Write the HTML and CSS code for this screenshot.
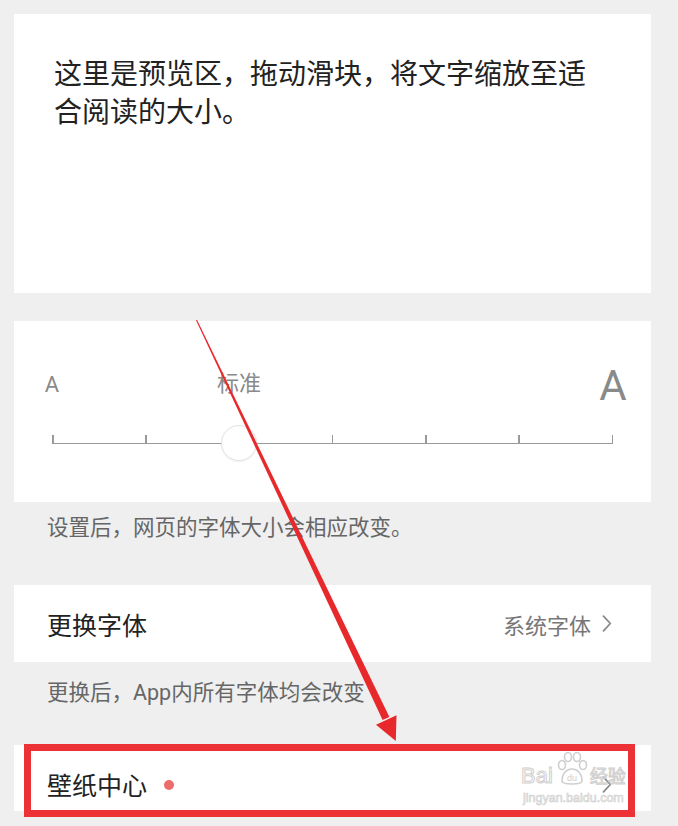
FILE: index.html
```html
<!DOCTYPE html>
<html lang="zh-CN">
<head>
<meta charset="utf-8">
<title>字体大小</title>
<link rel="stylesheet" href="styles.css">
</head>
<body>
<div class="page">
  <section class="card preview">
    <p class="preview-text">这里是预览区，拖动滑块，将文字缩放至适合阅读的大小。</p>
  </section>

  <section class="card slider-card">
    <div class="labels">
      <span class="slot"><span class="lbl lbl-small">A</span></span>
      <span class="slot"></span>
      <span class="slot"><span class="lbl lbl-std">标准</span></span>
      <span class="slot"></span>
      <span class="slot"></span>
      <span class="slot"></span>
      <span class="slot"><span class="lbl lbl-big">A</span></span>
    </div>
    <div class="track-wrap">
      <div class="track">
        <span class="tick"></span><span class="tick"></span><span class="tick"></span><span class="tick"></span><span class="tick"></span><span class="tick"></span><span class="tick"></span>
      </div>
      <span class="thumb"></span>
    </div>
  </section>

  <p class="caption cap1">设置后，网页的字体大小会相应改变。</p>

  <section class="card row">
    <span class="row-title">更换字体</span>
    <span class="row-value">系统字体
      <svg class="chev" width="10" height="17" viewBox="0 0 10 17"><path d="M1.5 1.2 L8.3 8.5 L1.5 15.8" fill="none" stroke="#8a8a8a" stroke-width="1.8" stroke-linecap="round" stroke-linejoin="round"/></svg>
    </span>
  </section>

  <p class="caption cap2">更换后，App内所有字体均会改变</p>

  <section class="card row last-row">
    <span class="row-title">壁纸中心 <span class="dot"></span></span>
    <span class="row-value">
      <svg class="chev" width="10" height="17" viewBox="0 0 10 17"><path d="M1.5 1.2 L8.3 8.5 L1.5 15.8" fill="none" stroke="#8a8a8a" stroke-width="1.8" stroke-linecap="round" stroke-linejoin="round"/></svg>
    </span>
    <span class="highlight"></span>
    <span class="watermark">
      <span class="wm-top"><span class="wm-bai">Bai</span><svg class="wm-paw" width="36" height="36" viewBox="0 0 36 36"><g fill="none" stroke="#cfcfcf" stroke-width="1.6"><ellipse cx="8" cy="14" rx="3.5" ry="4.5"/><ellipse cx="14" cy="6" rx="3.5" ry="4.5"/><ellipse cx="23" cy="6" rx="3.5" ry="4.5"/><ellipse cx="29" cy="14" rx="3.5" ry="4.5"/><path d="M8 30 C8 22 13 18 18 18 C23 18 28 22 28 30 C28 34 8 34 8 30 Z"/></g><text x="18" y="30" font-size="9" text-anchor="middle" fill="#cfcfcf" font-family="Liberation Sans, sans-serif">du</text></svg><span class="wm-jy">经验</span></span>
      <span class="wm-url">jingyan.baidu.com</span>
    </span>
  </section>

  <svg class="arrow" width="678" height="826" viewBox="0 0 678 826">
    <polygon points="196.0,320.2 197.0,319.8 389.4,717.0 382.6,720.0" fill="#e8292c"/>
    <polygon points="376,724.7 396.5,715.2 395.8,741" fill="#e8292c"/>
  </svg>
</div>
</body>
</html>
```

FILE: styles.css
```css
html, body {
  margin: 0;
  padding: 0;
}
body {
  background: #efefef;
  font-family: Roboto, "Noto Sans CJK SC", "Noto Sans", sans-serif;
  width: 678px;
  height: 826px;
  overflow: hidden;
}
.page {
  position: relative;
  width: 637px;
  padding: 14px 27px 0 14px;
}
.card {
  background: #ffffff;
}
.preview {
  height: 279px;
  box-sizing: border-box;
  padding: 42px 40px 0 40px;
}
.preview-text {
  margin: 0;
  font-size: 28px;
  line-height: 38px;
  color: #222222;
}
.slider-card {
  margin-top: 28px;
  height: 181px;
  box-sizing: border-box;
  padding: 40px 38px 0 38px;
}
.labels {
  display: flex;
  justify-content: space-between;
  align-items: center;
  height: 48px;
}
.slot {
  width: 0;
  display: flex;
  justify-content: center;
  align-items: center;
}
.lbl {
  white-space: nowrap;
  color: #8a8a8a;
  display: block;
}
.lbl-small {
  font-size: 22px;
  line-height: 26px;
  margin-top: 0px;
}
.lbl-std {
  font-size: 22px;
  line-height: 26px;
  margin-top: -2px;
}
.lbl-big {
  font-size: 42px;
  line-height: 48px;
  margin-top: 2px;
}
.track-wrap {
  position: relative;
  margin-top: 16px;
  height: 36px;
  display: flex;
  align-items: flex-start;
}
.track {
  margin-top: 10px;
  width: 100%;
  height: 8px;
  border-bottom: 1.5px solid #9a9a9a;
  display: flex;
  justify-content: space-between;
}
.tick {
  width: 1.5px;
  height: 8px;
  background: #9a9a9a;
}
.thumb {
  position: absolute;
  left: calc(33.333% - 18px);
  top: 0;
  width: 34px;
  height: 34px;
  border-radius: 50%;
  background: #ffffff;
  border: 1px solid #e2e2e2;
  box-shadow: 0 1px 2px rgba(0,0,0,0.06);
}
.caption {
  margin: 0;
  padding-left: 33px;
  font-size: 21.5px;
  line-height: 30px;
  color: #666666;
}
.cap1 {
  padding-top: 11px;
  padding-bottom: 42px;
}
.cap2 {
  padding-top: 16px;
  padding-bottom: 37px;
}
.row {
  display: flex;
  align-items: center;
  justify-content: space-between;
  height: 77px;
  box-sizing: border-box;
  padding: 0 39px 0 33px;
}
.row-title {
  font-size: 25px;
  color: #222222;
  display: flex;
  align-items: center;
}
.row-value {
  font-size: 22px;
  color: #777777;
  display: flex;
  align-items: center;
}
.chev {
  margin-left: 11px;
  display: block;
}
.dot {
  display: inline-block;
  width: 10px;
  height: 10px;
  border-radius: 50%;
  background: #ee6b6b;
  margin-left: 17px;
  margin-top: 2px;
}
.last-row {
  position: relative;
  height: 66px;
  margin-bottom: 0;
  padding-top: 12px;
}
.last-row .chev {
  margin-top: 0;
}
.highlight {
  position: absolute;
  left: 10px;
  top: -1px;
  width: 597px;
  height: 59px;
  border: 7px solid #ec3236;
}
.watermark {
  position: absolute;
  left: 507px;
  top: 5px;
  width: 124px;
  display: flex;
  flex-direction: column;
  align-items: flex-start;
  pointer-events: none;
}
.wm-top {
  display: flex;
  align-items: flex-end;
  height: 38px;
}
.wm-bai {
  font-family: "Liberation Sans", sans-serif;
  font-size: 22px;
  line-height: 24px;
  color: transparent;
  -webkit-text-stroke: 1px #cfcfcf;
  margin-right: 1px;
}
.wm-paw {
  display: block;
  margin-bottom: 1px;
}
.wm-jy {
  font-size: 18px;
  line-height: 22px;
  color: transparent;
  -webkit-text-stroke: 1px #cfcfcf;
}
.wm-url {
  font-family: "Liberation Sans", sans-serif;
  font-size: 12.5px;
  line-height: 14px;
  color: transparent;
  -webkit-text-stroke: 0.7px #d0d0d0;
  margin-left: 2px;
  margin-top: 3px;
}
.arrow {
  position: absolute;
  left: 0;
  top: 0;
  pointer-events: none;
}
```
